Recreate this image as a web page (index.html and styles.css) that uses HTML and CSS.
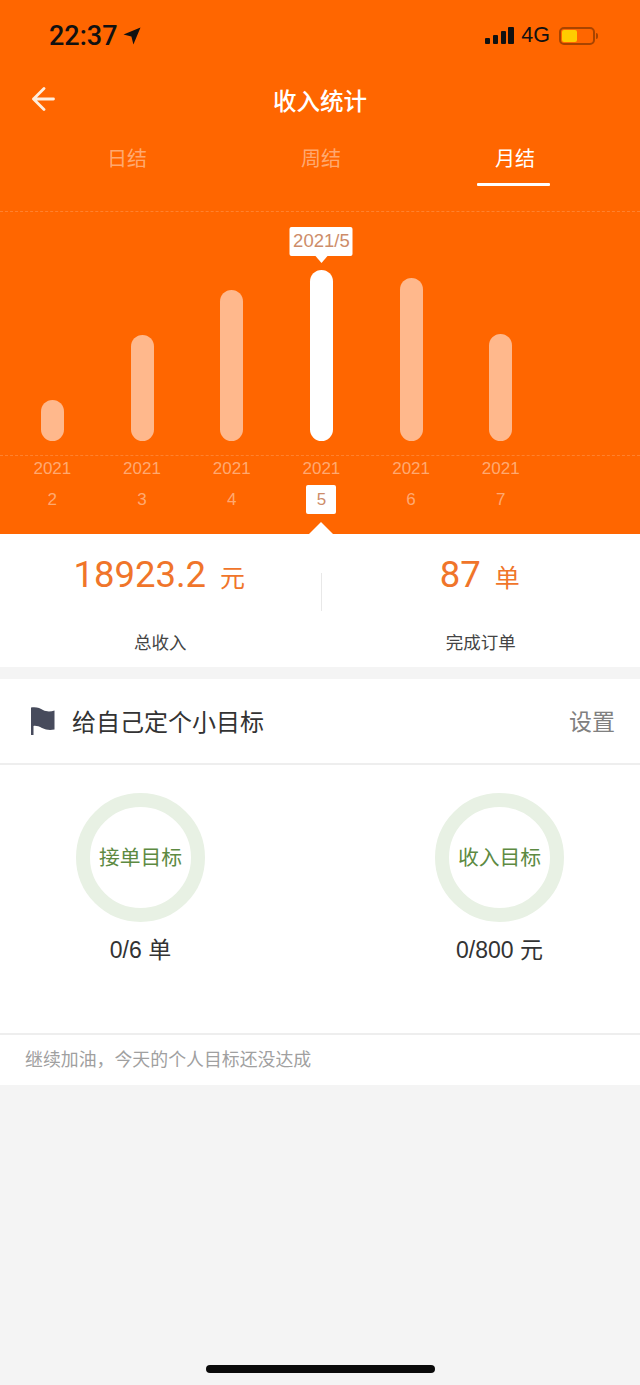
FILE: index.html
```html
<!DOCTYPE html>
<html lang="zh-CN">
<head>
  <meta charset="UTF-8">
  <title>收入统计</title>
  <link rel="stylesheet" href="styles.css">
</head>
<body>

<!-- 橙色头部 -->
<header class="head">
  <div class="status">
    <div class="status-left">
      <span class="time">22:37</span>
      <svg class="loc" width="18" height="18" viewBox="0 0 18 18"><path d="M17.5 .5 L.5 7.6 L8.4 9.6 L10.4 17.5 Z" fill="#111"/></svg>
    </div>
    <div class="status-right">
      <svg class="signal" width="29" height="18" viewBox="0 0 29 18"><rect x="0" y="11" width="5" height="6" rx="1"/><rect x="8" y="8" width="5" height="9" rx="1"/><rect x="16" y="4" width="5" height="13" rx="1"/><rect x="23" y="0" width="6" height="17" rx="1"/></svg>
      <span class="net">4G</span>
      <div class="battery"><div class="battery-fill"></div></div>
    </div>
  </div>

  <div class="nav">
    <svg class="back" width="24" height="24" viewBox="0 0 24 24"><path d="M22.5 12 H2.5 M13 1.5 L2.5 12 L13 22.5" fill="none" stroke="#ffeedd" stroke-width="2.8" stroke-linecap="round" stroke-linejoin="round"/></svg>
    <div class="title">收入统计</div>
  </div>

  <div class="tabs">
    <a class="tab">日结</a>
    <a class="tab">周结</a>
    <a class="tab on">月结</a>
  </div>

  <div class="chart">
    <div class="col"><div class="bar" style="height:41px"></div></div>
    <div class="col"><div class="bar" style="height:106px"></div></div>
    <div class="col"><div class="bar" style="height:151px"></div></div>
    <div class="col">
      <div class="bar on" style="height:171px"><div class="tip">2021/5</div></div>
    </div>
    <div class="col"><div class="bar" style="height:163px"></div></div>
    <div class="col"><div class="bar" style="height:107px"></div></div>
  </div>

  <div class="months">
    <div class="month"><span class="y">2021</span><span class="m">2</span></div>
    <div class="month"><span class="y">2021</span><span class="m">3</span></div>
    <div class="month"><span class="y">2021</span><span class="m">4</span></div>
    <div class="month on"><span class="y">2021</span><span class="m">5</span></div>
    <div class="month"><span class="y">2021</span><span class="m">6</span></div>
    <div class="month"><span class="y">2021</span><span class="m">7</span></div>
  </div>
</header>

<!-- 汇总 -->
<section class="stats">
  <div class="stat">
    <div class="num">18923.2<em>元</em></div>
    <div class="label">总收入</div>
  </div>
  <div class="split"></div>
  <div class="stat">
    <div class="num">87<em>单</em></div>
    <div class="label">完成订单</div>
  </div>
</section>

<!-- 小目标 -->
<section class="goal">
  <div class="goal-head">
    <svg class="flag" width="25" height="28" viewBox="0 0 25 28"><path d="M0 .5 C5 -.5 9 1 12 3 C16 5 20 4.5 23.5 3.5 V22.5 C19 23.5 15 23 11 21 C8 19.5 5 18.5 2.5 19 V28 H0 Z" fill="#474b5c"/></svg>
    <div class="goal-title">给自己定个小目标</div>
    <a class="goal-set">设置</a>
  </div>
  <div class="rings">
    <div class="ring-item">
      <div class="ring">接单目标</div>
      <div class="ring-val">0/6 单</div>
    </div>
    <div class="ring-item">
      <div class="ring">收入目标</div>
      <div class="ring-val">0/800 元</div>
    </div>
  </div>
  <div class="goal-foot">继续加油，今天的个人目标还没达成</div>
</section>

<div class="home-bar"></div>

</body>
</html>
```

FILE: styles.css
```css
html, body { margin: 0; padding: 0; }
body {
  width: 640px;
  height: 1385px;
  overflow: hidden;
  position: relative;
  background: #f4f4f4;
  font-family: "Liberation Sans", "Noto Sans CJK SC", sans-serif;
  color: #222;
}

.head { background: #ff6600; height: 534px; position: relative; }

.status { height: 66px; display: flex; justify-content: space-between; }
.status-left { display: flex; align-items: center; padding: 6px 0 0 49px; gap: 5px; }
.time { font-family: Roboto, sans-serif; font-size: 27px; font-weight: 500; color: #111; line-height: 60px; }
.status-right { display: flex; align-items: center; padding: 5px 45px 0 0; }
.signal { fill: #111; }
.net { font-size: 21.5px; color: #111; margin: 0 9px 0 7px; }
.battery {
  width: 36px;
  height: 18px;
  box-sizing: border-box;
  border: 2px solid #a84400;
  border-radius: 5px;
  padding: 1px;
  position: relative;
}
.battery::after {
  content: "";
  position: absolute;
  right: -5px;
  top: 4px;
  width: 2px;
  height: 6px;
  background: #a84400;
  border-radius: 0 2px 2px 0;
}
.battery-fill { width: 15px; height: 12px; background: #ffcc00; border-radius: 2px; }

.nav { height: 68px; display: flex; align-items: center; justify-content: center; position: relative; }
.back { position: absolute; left: 31px; top: 21px; }
.title { font-size: 23.5px; color: #fff; font-weight: 500; }

.tabs { display: grid; grid-template-columns: repeat(3, 194px); padding-left: 30px; height: 52px; }
.tab { text-align: center; font-size: 20px; line-height: 50px; color: rgba(255,255,255,.45); position: relative; }
.tab.on { color: #fff; }
.tab.on::after {
  content: "";
  position: absolute;
  left: 59px;
  bottom: 0;
  width: 73px;
  height: 3px;
  background: #fff;
  border-radius: 1px;
}

.chart {
  margin-top: 25px;
  height: 245px;
  box-sizing: border-box;
  padding: 0 0 14px 7.5px;
  display: grid;
  grid-template-columns: repeat(6, 89.7px);
  align-items: end;
  border-top: 1px dashed rgba(255,255,255,.18);
  border-bottom: 1px dashed rgba(255,255,255,.18);
}
.col { display: flex; justify-content: center; }
.bar { width: 23px; background: #ffb88c; border-radius: 11.5px; position: relative; }
.bar.on { background: #fff; }
.tip {
  position: absolute;
  left: 50%;
  top: -43px;
  transform: translateX(-50%);
  width: 63px;
  height: 29px;
  background: #fff;
  border-radius: 2px;
  color: #cd8c69;
  font-size: 18.5px;
  line-height: 27px;
  text-align: center;
}
.tip::after {
  content: "";
  position: absolute;
  left: 50%;
  top: 29px;
  margin-left: -6px;
  border: 6px solid transparent;
  border-top: 7px solid #fff;
  border-bottom: 0;
}

.months {
  display: grid;
  grid-template-columns: repeat(6, 89.7px);
  padding-left: 7.5px;
}
.month { display: flex; flex-direction: column; align-items: center; }
.y { font-size: 17px; line-height: 26px; color: rgba(255,255,255,.45); }
.m {
  font-size: 17px;
  width: 30px;
  height: 29px;
  margin-top: 3px;
  line-height: 29px;
  text-align: center;
  color: rgba(255,255,255,.45);
  border-radius: 2px;
}
.month.on .m { background: #fff; color: #cd8c69; }
.month.on::after {
  content: "";
  position: absolute;
  bottom: 0;
  border: 12px solid transparent;
  border-top: 0;
  border-bottom: 12px solid #fff;
}

.stats {
  background: #fff;
  height: 133px;
  display: grid;
  grid-template-columns: 320.5px 1px 318.5px;
}
.stat { text-align: center; }
.num { font-size: 36.5px; line-height: 42px; margin-top: 20px; padding-right: 2px; color: #f0752a; font-family: Roboto, "Noto Sans CJK SC", sans-serif; font-weight: 400; }
.num em { font-style: normal; font-size: 25px; margin-left: 14px; font-weight: 400; }
.label { font-size: 17.5px; line-height: 24px; margin-top: 31px; color: #444; }
.split { background: #e8e8e8; height: 38px; margin-top: 39px; }

.goal { margin-top: 12px; background: #fff; height: 406px; display: flex; flex-direction: column; }
.goal-head {
  height: 86px;
  flex: none;
  box-sizing: border-box;
  padding: 0 25px 2px 31px;
  display: flex;
  align-items: center;
  border-bottom: 2px solid #eeeeee;
}
.flag { margin-right: 16px; margin-top: 1px; }
.goal-title { font-size: 24px; color: #333; flex: 1; }
.goal-set { font-size: 23px; color: #808080; }

.rings { height: 270px; flex: none; box-sizing: border-box; padding: 28px 76px 0; display: flex; justify-content: space-between; border-bottom: 2px solid #eeeeee; }
.ring-item { width: 129px; display: flex; flex-direction: column; align-items: center; }
.ring {
  width: 129px;
  height: 129px;
  box-sizing: border-box;
  border: 14px solid #e8f1e4;
  border-radius: 50%;
  padding-bottom: 4px;
  display: flex;
  align-items: center;
  justify-content: center;
  white-space: nowrap;
  font-size: 20.8px;
  color: #5d8a42;
}
.ring-val { font-size: 23px; line-height: 28px; margin-top: 14px; color: #333; white-space: nowrap; }

.goal-foot { font-size: 17.9px; line-height: 50px; padding-left: 25px; color: #a0a0a0; }

.home-bar {
  position: absolute;
  left: 206px;
  top: 1365px;
  width: 229px;
  height: 8px;
  background: #0a0a0a;
  border-radius: 4px;
}
```
